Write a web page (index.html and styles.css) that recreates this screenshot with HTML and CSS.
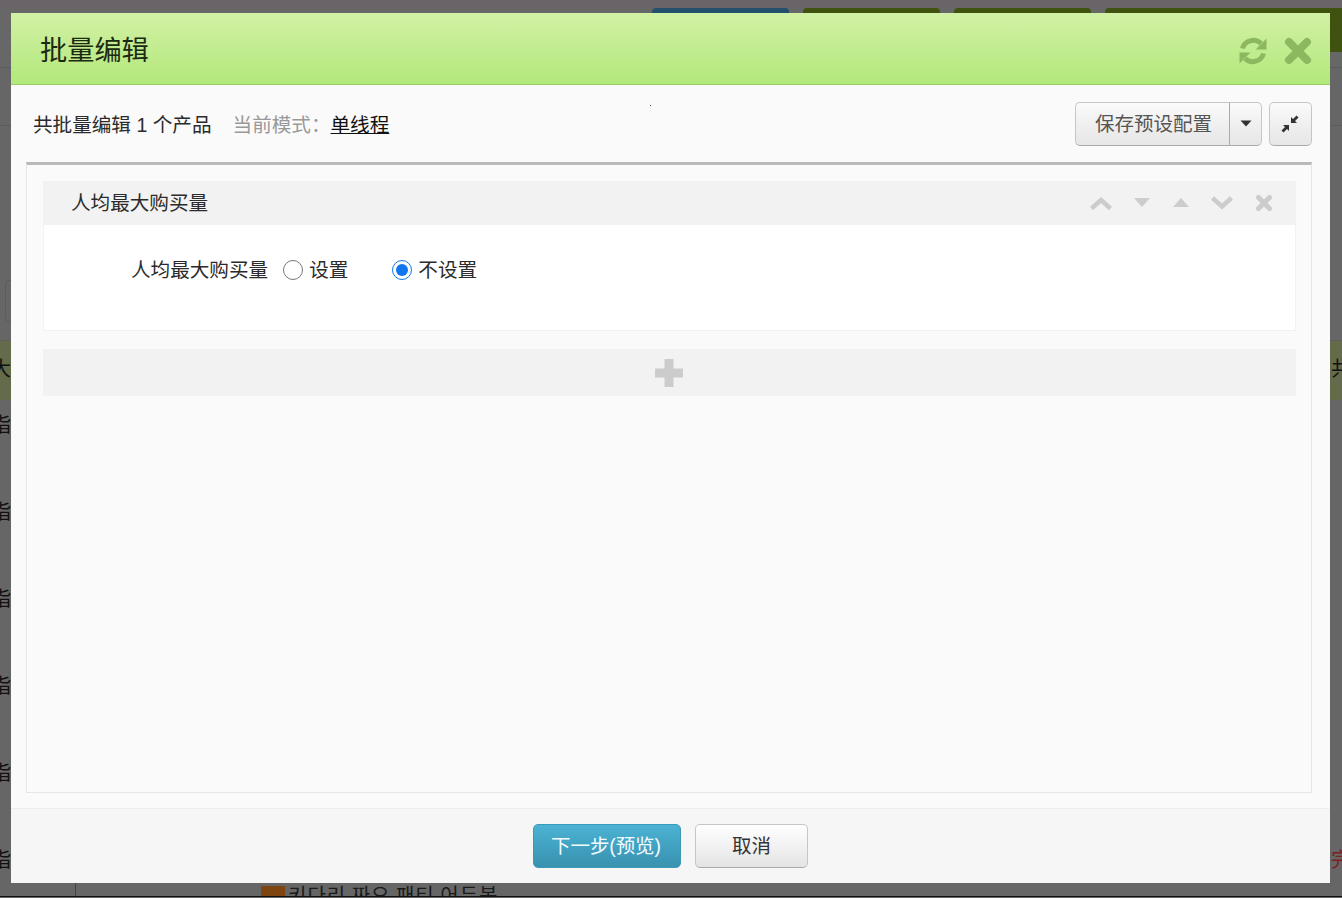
FILE: index.html
```html
<!DOCTYPE html>
<html lang="zh-CN">
<head>
<meta charset="utf-8">
<title>批量编辑</title>
<link rel="stylesheet" href="styles.css">
</head>
<body>
<div class="backdrop">
  <div class="bd-top">
    <span class="bd-tab bd-tab-blue"></span>
    <span class="bd-tab"></span>
    <span class="bd-tab"></span>
    <span class="bd-tab bd-tab-last"></span>
  </div>
  <div class="bd-filter"><i class="bd-line"></i><i class="bd-input"></i></div>
  <div class="bd-band"><span class="bd-cut">大</span><span class="bd-cut-r">共</span></div>
  <div class="bd-row"><span class="bd-cut">指</span></div>
  <div class="bd-row"><span class="bd-cut">指</span></div>
  <div class="bd-row"><span class="bd-cut">指</span></div>
  <div class="bd-row"><span class="bd-cut">指</span></div>
  <div class="bd-row"><span class="bd-cut">指</span></div>
  <div class="bd-row bd-row-last"><span class="bd-cut">指</span><span class="bd-cut-r bd-red">完</span></div>
  <div class="bd-bottom">
    <span class="bd-vline"></span>
    <span class="bd-thumb"></span>
    <span class="bd-name">키다리 짜요 패티 어두봉</span>
  </div>
</div>

<section class="modal">
  <header class="modal-head">
    <h1 class="modal-title">批量编辑</h1>
    <div class="head-icons">
      <svg class="ico-refresh" width="30" height="30" viewBox="0 0 30 30"><path class="s-green" d="M4.500 12.500A11 10.500 0 0 1 23 7.500"/><path class="f-green" d="M28.500 2.500V13.500H17.500Z"/><path class="s-green" d="M25.500 17.500A11 10.500 0 0 1 7 22.500"/><path class="f-green" d="M1.500 27.500V16.500H12.500Z"/></svg>
      <svg class="ico-close" width="30" height="30" viewBox="0 0 30 30"><path class="x-green" d="M6 6 24 24M24 6 6 24"/></svg>
    </div>
  </header>

  <div class="toolbar">
    <div class="summary">
      <span class="count">共批量编辑 1 个产品</span>
      <span class="mode">当前模式：</span>
      <a class="mode-link" href="#">单线程</a>
    </div>
    <i class="speck"></i>
    <div class="tools">
      <div class="split">
        <button class="btn btn-save" type="button">保存预设配置</button>
        <button class="btn btn-drop" type="button"><svg width="12" height="7" viewBox="0 0 12 7"><path class="f-dark" d="M0.500 0.500H11.500L6 6.500Z"/></svg></button>
      </div>
      <button class="btn btn-compress" type="button">
        <svg width="20" height="20" viewBox="0 0 20 20"><path class="f-dark" d="M11 9V3L13 5 16.500 1.500 18.500 3.500 15 7 17 9Z"/><path class="f-dark" d="M9 11V17L7 15 3.500 18.500 1.500 16.500 5 13 3 11Z"/></svg>
      </button>
    </div>
  </div>

  <div class="panel">
    <article class="item">
      <div class="item-head">
        <h2 class="item-title">人均最大购买量</h2>
        <div class="item-icons">
          <svg width="24" height="16" viewBox="0 0 24 16"><path class="s-grey" d="M2.500 13.500 12 5 21.500 13.500"/></svg>
          <svg width="20" height="12" viewBox="0 0 20 12"><path class="f-grey" d="M2 1H18L10 10Z"/></svg>
          <svg width="20" height="12" viewBox="0 0 20 12"><path class="f-grey" d="M2 10H18L10 1Z"/></svg>
          <svg width="24" height="16" viewBox="0 0 24 16"><path class="s-grey" d="M2.500 3 12 11.500 21.500 3"/></svg>
          <svg class="ico-del" width="18" height="18" viewBox="0 0 18 18"><path class="x-grey" d="M3.500 3.500 14.500 14.500M14.500 3.500 3.500 14.500"/></svg>
        </div>
      </div>
      <div class="item-body">
        <span class="field-label">人均最大购买量</span>
        <label class="radio radio-first"><input type="radio" name="limit"><span>设置</span></label>
        <label class="radio"><input type="radio" name="limit" checked><span>不设置</span></label>
      </div>
    </article>
    <button class="add-bar" type="button" aria-label="添加">
      <svg width="30" height="30" viewBox="0 0 30 30"><path class="plus" d="M15 1V29M1 15H29"/></svg>
    </button>
  </div>

  <footer class="modal-foot">
    <button class="btn-primary" type="button">下一步(预览)</button>
    <button class="btn btn-cancel" type="button">取消</button>
  </footer>
</section>
</body>
</html>
```
FILE: styles.css
```css
* { box-sizing: border-box; }
html, body { margin: 0; height: 100%; overflow: hidden; }
body {
  position: relative;
  width: 1342px;
  height: 898px;
  background: #666;
  font-family: "Liberation Sans", "Noto Sans CJK SC", sans-serif;
  color: #222;
}

/* dimmed page behind the dialog */
.backdrop { height: 898px; overflow: hidden; display: flex; flex-direction: column; background: #666; }
.bd-top { height: 68px; padding: 8px 0 0 652px; display: flex; gap: 14px; background: linear-gradient(#6a6468 0, #6a6468 8px, #676767 8px); border-bottom: 1px solid #5c5c5c; flex: none; }
.bd-tab { width: 137px; height: 44px; background: #3f5210; border-radius: 4px 4px 0 0; }
.bd-tab-blue { background: #24506e; }
.bd-tab-last { flex: 1; border-radius: 4px 0 0 0; }
.bd-filter { height: 272px; flex: none; display: flex; flex-direction: column; }
.bd-line { display: block; height: 1px; margin-top: 57px; background: #5c5c5c; }
.bd-input { display: block; width: 12px; height: 42px; margin: 154px 0 0 5px; border: 1px solid #5c5c5c; border-radius: 4px 0 0 4px; }
.bd-band { height: 60px; flex: none; background: #646b4a; display: flex; justify-content: space-between; align-items: flex-start; line-height: 56px; border-top: 1px solid #5e5e5e; }
.bd-row { height: 87px; flex: none; display: flex; justify-content: space-between; align-items: flex-start; line-height: 50px; }
.bd-row-last { height: 48px; }
.bd-cut { margin-left: -9px; font-size: 20px; color: #111; }
.bd-cut-r { font-size: 20px; margin-right: -9px; color: #111; }
.bd-red { color: #7d1f1f; }
.bd-bottom { height: 14px; flex: none; display: flex; align-items: flex-start; overflow: hidden; padding-left: 75px; border-bottom: 1px solid #111; }
.bd-vline { width: 1px; height: 13px; background: #444; }
.bd-thumb { width: 24px; height: 14px; margin: 3px 3px 0 185px; background: #7e4510; flex: none; }
.bd-name { font: 20px/24px "Noto Sans CJK KR", sans-serif; color: #1a1a1a; letter-spacing: 1px; white-space: nowrap; }

/* dialog */
.modal {
  position: absolute;
  left: 11px;
  top: 13px;
  width: 1319px;
  height: 870px;
  display: flex;
  flex-direction: column;
  background: #fafafa;
}
.modal-head {
  flex: none;
  height: 72px;
  padding: 5px 17px 0 29px;
  display: flex;
  align-items: center;
  justify-content: space-between;
  background: linear-gradient(#d1f1a5, #b3e87b);
  border-bottom: 1px solid #9ccb68;
}
.modal-title { margin: 0; font-size: 27.200px; font-weight: 400; color: #1c2a12; line-height: 40px; }
.head-icons { display: flex; gap: 15px; align-items: center; }
.s-green { fill: none; stroke: #8cb860; stroke-width: 5; }
.f-green { fill: #8cb860; }
.x-green { fill: none; stroke: #8cb860; stroke-width: 8; stroke-linecap: round; }
.f-dark { fill: #333; }
.s-grey { fill: none; stroke: #ccc; stroke-width: 4.500; }
.f-grey { fill: #ccc; }
.x-grey { fill: none; stroke: #ccc; stroke-width: 5; stroke-linecap: round; }
.plus { fill: none; stroke: #ccc; stroke-width: 9; }

.toolbar {
  flex: none;
  height: 77px;
  padding: 0 18px 0 22px;
  display: flex;
  align-items: center;
  justify-content: space-between;
  position: relative;
}
.summary { font-size: 19.600px; display: flex; align-items: center; line-height: 28px; padding-top: 2px; }
.count { color: #2b2b2b; }
.mode { margin-left: 21px; color: #999; }
.mode-link { color: #111; text-decoration: underline; }
.speck { position: absolute; left: 639px; top: 20px; width: 1px; height: 1px; background: #555; }
.tools { display: flex; gap: 7px; }
.split { display: flex; }
.btn {
  height: 44px;
  margin: 0;
  padding: 0;
  border: 1px solid #c6c6c6;
  border-bottom-color: #aaa;
  border-radius: 5px;
  background: linear-gradient(#fafafa, #e6e6e6);
  font: 19.500px "Liberation Sans", "Noto Sans CJK SC", sans-serif;
  color: #555;
  display: flex;
  align-items: center;
  justify-content: center;
}
.btn-save { width: 155px; padding: 0 0 2px 2px; border-radius: 5px 0 0 5px; border-right-color: #aaa; }
.btn-drop { width: 32px; border-left: 0; border-radius: 0 5px 5px 0; }
.btn-compress { width: 43px; padding-right: 2px; }

.panel {
  flex: 1;
  margin: 0 18px 15px 15px;
  padding: 16px 15px 0 16px;
  background: #fafafa;
  border: 1px solid #e6e6e6;
  border-top: 3px solid #b9b9b9;
}
.item { height: 150px; background: #fff; border: 1px solid #f2f2f2; border-top: 0; display: flex; flex-direction: column; }
.item-head { flex: none; height: 44px; margin: 0 -1px; padding: 0 23px 3px 28px; background: #f2f2f2; display: flex; align-items: center; justify-content: space-between; }
.item-title { margin: 0; font-size: 19.600px; font-weight: 400; color: #2b2b2b; }
.item-icons { display: flex; align-items: center; gap: 19px; padding-top: 3px; }
.ico-del { margin-left: 2px; }
.item-body { flex: 1; padding: 26px 0 0 87px; display: flex; align-items: flex-start; font-size: 19.600px; line-height: 38px; color: #2b2b2b; }
.radio { display: flex; align-items: center; gap: 6px; height: 38px; }
.radio-first { margin: 0 44px 0 15px; }
.radio input { width: 20px; height: 20px; margin: 0; accent-color: #0f76ee; }
.add-bar {
  display: flex;
  align-items: center;
  justify-content: center;
  width: 100%;
  height: 47px;
  margin-top: 18px;
  padding: 0 2px 0 0;
  border: 0;
  background: #f2f2f2;
}
.modal-foot {
  flex: none;
  height: 75px;
  padding-top: 15px;
  display: flex;
  justify-content: center;
  align-items: flex-start;
  gap: 14px;
  background: #f6f6f6;
  border-top: 1px solid #eee;
}
.btn-primary {
  width: 148px;
  height: 44px;
  margin: 0;
  padding: 0 2px 3px 0;
  border: 1px solid #3c9ab8;
  border-radius: 5px;
  background: linear-gradient(#4cb2d3, #3892b0);
  color: #f2fbff;
  font: 19.500px "Liberation Sans", "Noto Sans CJK SC", sans-serif;
  letter-spacing: -0.100px;
}
.btn-cancel { width: 113px; padding-bottom: 3px; background: linear-gradient(#fff, #e4e4e4); color: #333; }
```
